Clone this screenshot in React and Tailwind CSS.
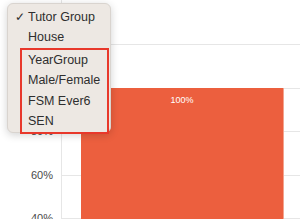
const ticks = ['120%', '100%', '80%', '60%', '40%']

function Item({ label, checked, className = '' }) {
  return (
    <div className={`flex items-center h-[20.5px] ${className}`}>
      {checked !== undefined && (
        <span className="w-[20px] pl-[7px] text-[12px] leading-none">{checked ? '✓' : ''}</span>
      )}
      <span>{label}</span>
    </div>
  )
}

export default function App() {
  return (
    <div className="relative w-[300px] h-[219px] bg-white overflow-hidden" style={{ fontFamily: '"Liberation Sans", Arial, sans-serif' }}>
      {/* chart */}
      <div className="flex h-full">
        <div className="w-[61px] shrink-0 pt-[37px] pr-[8px] text-right text-[11px] text-[#4a4a4a]">
          {ticks.map(t => (
            <div key={t} className="h-[43.5px] leading-[14px]">{t}</div>
          ))}
        </div>
        <div className="relative flex-1 border-l border-[#e6e6e6] pt-[44px]">
          {ticks.map(t => (
            <div key={t} className="h-[43.5px] border-t border-[#e6e6e6]" />
          ))}
          <div className="absolute left-[19px] top-[88px] w-[203px] bottom-0 bg-[#ec5f3e] border-r border-[#f3a48f]">
            <div className="text-center text-white text-[9px] pt-[6px]">100%</div>
          </div>
        </div>
      </div>

      {/* dropdown menu */}
      <div className="absolute left-[7px] top-[3px] w-[104px] h-[130px] rounded-[6px] bg-[#ede8e3] border border-[#d9d4cf] shadow-[0_2px_8px_rgba(0,0,0,0.18)] py-[3px] text-[12.5px] text-[#2e2e2e]">
        <Item label="Tutor Group" checked={true} />
        <Item label="House" checked={false} />
        <div className="ml-[14px] mr-[3px] mt-[2px] outline-2 outline-[#e8382b] pl-[6px]">
          <Item label="YearGroup" />
          <Item label="Male/Female" />
          <Item label="FSM Ever6" />
          <Item label="SEN" className="h-[19px]" />
        </div>
      </div>
    </div>
  )
}
